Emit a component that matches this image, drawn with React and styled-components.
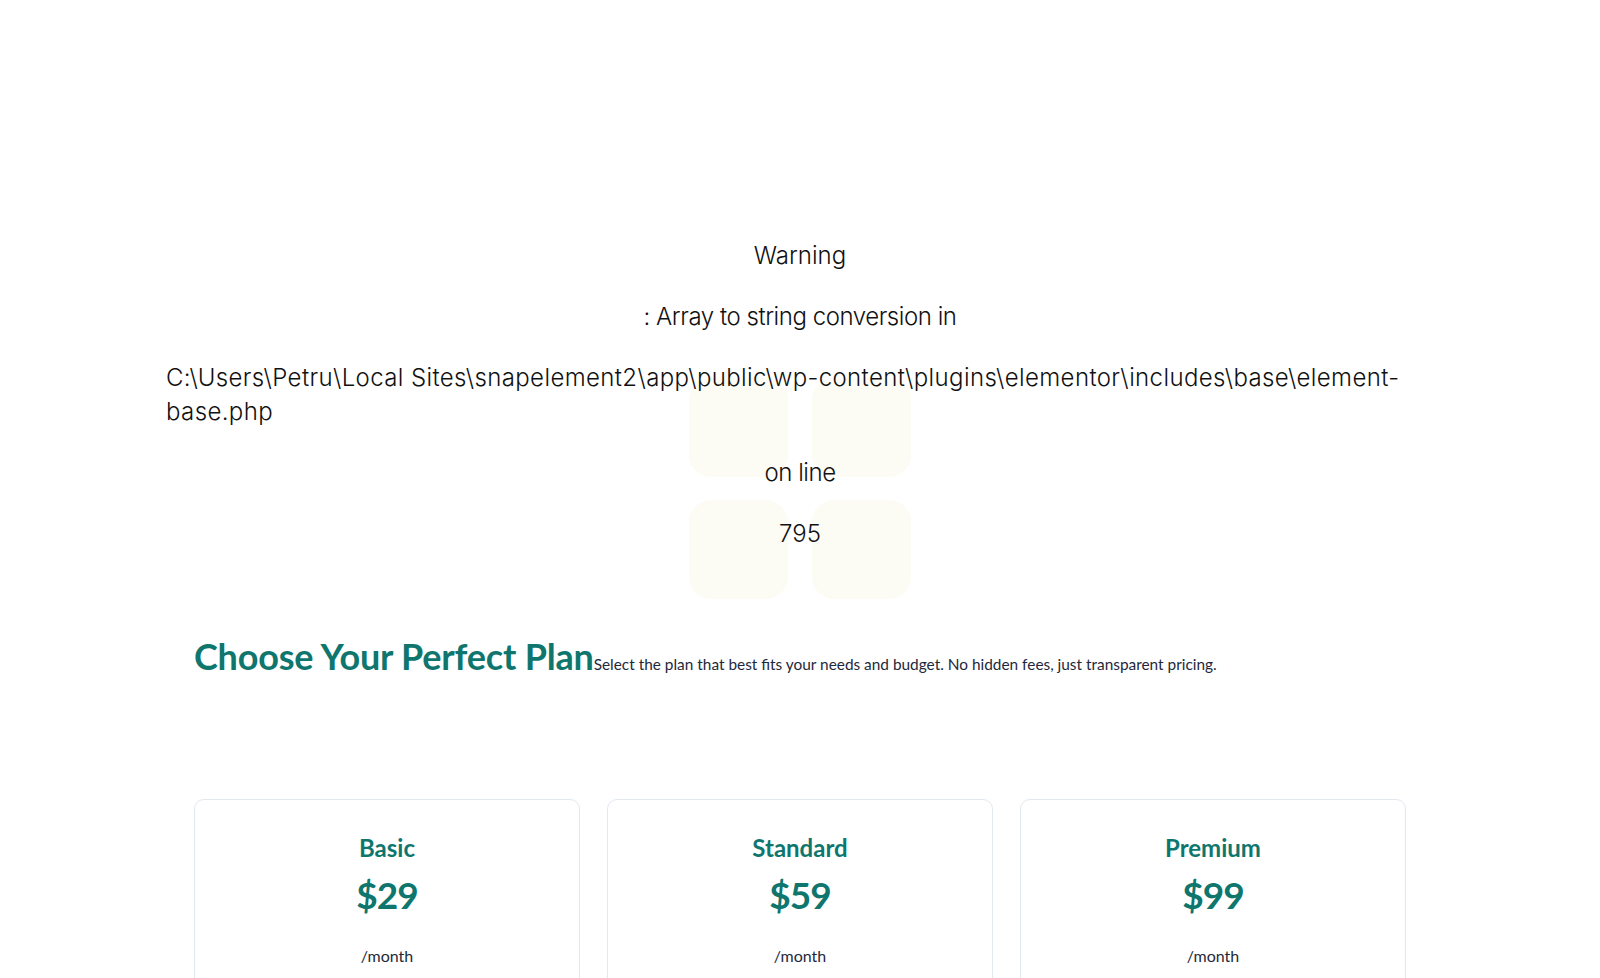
import React from "react";
import styled, { createGlobalStyle } from "styled-components";

const GlobalStyle = createGlobalStyle`
  html, body {
    margin: 0;
    padding: 0;
    background: #ffffff;
  }
  * { box-sizing: border-box; }
`;

const Page = styled.div`
  width: 100%;
  min-height: 100vh;
  background: #ffffff;
`;

const NoticeArea = styled.section`
  position: relative;
  padding-top: 239px;
`;

const Decoration = styled.div`
  position: absolute;
  top: 378px;
  left: 50%;
  transform: translateX(-50%);
  display: grid;
  grid-template-columns: repeat(2, 99px);
  grid-auto-rows: 99px;
  gap: 23px 24px;
  z-index: 0;
`;

const Tile = styled.div`
  background: #fcfbf4;
  border-radius: 22px;
`;

const Notice = styled.div`
  position: relative;
  z-index: 1;
  width: 1268px;
  margin: 0 auto;
  display: flex;
  flex-direction: column;
  align-items: center;
  gap: 27px;
  font-family: "Inter", "Noto Sans", sans-serif;
  font-weight: 300;
  font-size: 24px;
  line-height: 34px;
  color: #111111;
`;

const NoticeStrong = styled.b`
  font-weight: 300;
  letter-spacing: ${(p) => (p.$path ? "0.38px" : "0")};
`;

const NoticeText = styled.span`
  letter-spacing: -0.45px;
`;

const Pricing = styled.section`
  width: 1212px;
  margin: 0 auto;
  padding-top: 83px;
  padding-bottom: 80px;
  font-family: "Lato", "Noto Sans", sans-serif;
`;

const Header = styled.div`
  display: flex;
  align-items: baseline;
`;

const Heading = styled.h2`
  margin: 0;
  font-size: 36px;
  line-height: 1.25;
  font-weight: 700;
  letter-spacing: -0.2px;
  color: #0f766e;
`;

const Subtitle = styled.p`
  margin: 0;
  font-size: 15.4px;
  line-height: 1.6;
  color: #1e293b;
`;

const Cards = styled.div`
  display: grid;
  grid-template-columns: repeat(3, 1fr);
  gap: 27px;
  margin-top: 120px;
`;

const Card = styled.div`
  border: 1px solid #e2e8f0;
  border-radius: 10px;
  padding: 34px 24px 32px;
  text-align: center;
  background: #ffffff;
`;

const PlanName = styled.h3`
  margin: 0;
  font-size: 24px;
  line-height: 1.2;
  font-weight: 700;
  color: #0f766e;
`;

const Price = styled.div`
  margin-top: 10px;
  font-size: 37px;
  line-height: 1.2;
  font-weight: 700;
  letter-spacing: -1px;
  color: #0f766e;
`;

const Period = styled.div`
  margin-top: 27px;
  font-size: 16px;
  line-height: 24px;
  color: #1e293b;
`;

const Features = styled.ul`
  list-style: none;
  margin: 24px 0 0;
  padding: 0;
  font-size: 15px;
  line-height: 2;
  color: #334155;
`;

const plans = [
  { name: "Basic", price: "$29", features: ["1 Website", "10 GB Storage", "Email Support"] },
  { name: "Standard", price: "$59", features: ["5 Websites", "50 GB Storage", "Priority Support"] },
  { name: "Premium", price: "$99", features: ["Unlimited Websites", "200 GB Storage", "24/7 Support"] },
];

export default function App() {
  return (
    <Page>
      <GlobalStyle />
      <NoticeArea>
        <Decoration aria-hidden="true">
          <Tile />
          <Tile />
          <Tile />
          <Tile />
        </Decoration>
        <Notice>
          <NoticeStrong>Warning</NoticeStrong>
          <NoticeText>: Array to string conversion in</NoticeText>
          <NoticeStrong $path>
            C:\Users\Petru\Local Sites\snapelement2\app\public\wp-content\plugins\elementor\includes\base\element-base.php
          </NoticeStrong>
          <NoticeText>on line</NoticeText>
          <NoticeStrong>795</NoticeStrong>
        </Notice>
      </NoticeArea>
      <Pricing>
        <Header>
          <Heading>Choose Your Perfect Plan</Heading>
          <Subtitle>
            Select the plan that best fits your needs and budget. No hidden fees, just transparent pricing.
          </Subtitle>
        </Header>
        <Cards>
          {plans.map((p) => (
            <Card key={p.name}>
              <PlanName>{p.name}</PlanName>
              <Price>{p.price}</Price>
              <Period>/month</Period>
              <Features>
                {p.features.map((f) => (
                  <li key={f}>{f}</li>
                ))}
              </Features>
            </Card>
          ))}
        </Cards>
      </Pricing>
    </Page>
  );
}
